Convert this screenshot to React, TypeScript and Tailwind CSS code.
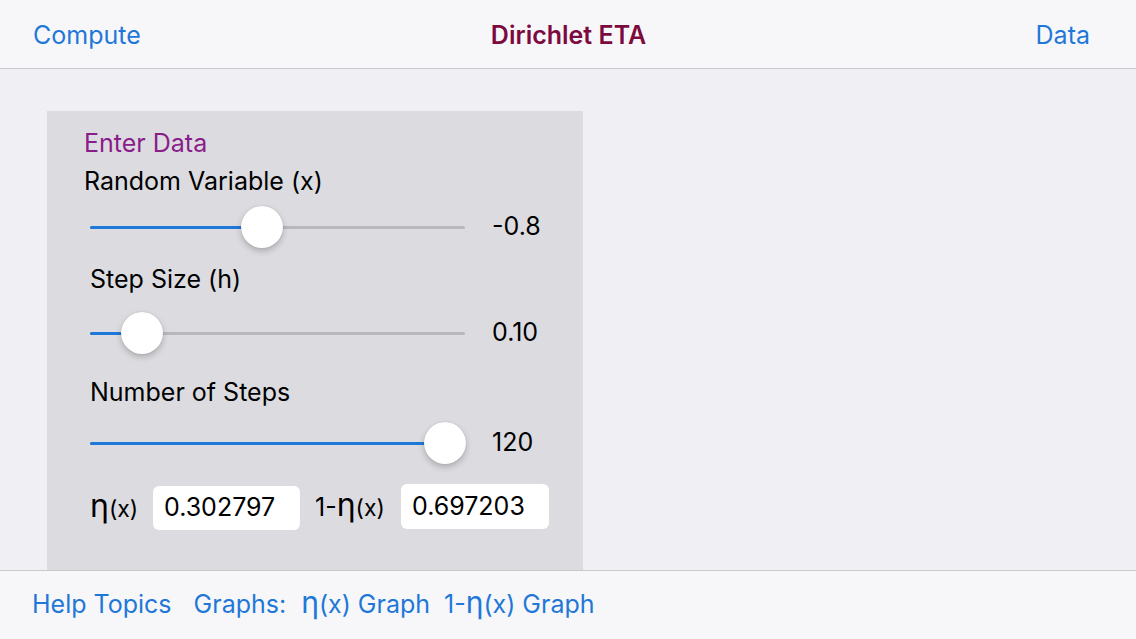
import React from "react";

interface SliderProps {
  pos: number; // thumb center, px from track start
  value: string;
}

function Slider({ pos, value }: SliderProps) {
  return (
    <div className="flex items-center h-[46px]">
      <div className="relative w-[375px] h-[3px] bg-[#b8b8bc] rounded-full">
        <div className="absolute left-0 top-0 h-[3px] bg-[#1f78d8] rounded-full" style={{ width: pos }} />
        <div
          className="absolute top-1/2 w-[42px] h-[42px] -translate-x-1/2 -translate-y-1/2 rounded-full bg-white shadow-[0_3px_6px_rgba(0,0,0,0.22),0_0_1px_rgba(0,0,0,0.2)]"
          style={{ left: pos }}
        />
      </div>
      <span className="ml-[27px] text-[25px] text-black">{value}</span>
    </div>
  );
}

export default function App() {
  return (
    <div className="w-[1136px] h-[639px] flex flex-col bg-[#efeff4] overflow-hidden font-['Inter','Liberation_Sans',sans-serif]">
      {/* nav bar */}
      <div className="h-[69px] shrink-0 grid grid-cols-[1fr_auto_1fr] items-center pl-[33px] pr-[46px] pt-[3px] bg-[#f7f7f9] border-b border-[#c9c9cd] text-[25px]">
        <span className="text-[#1f78d8]">Compute</span>
        <span className="font-semibold text-[#7c0a3e] translate-x-[7px]">Dirichlet ETA</span>
        <span className="text-[#1f78d8] text-right">Data</span>
      </div>

      {/* content */}
      <div className="flex-1 min-h-0 pt-[42px] pl-[47px]">
        <div className="w-[536px] h-full bg-[#dcdce0] pl-[37px] pt-[16px]">
          <div className="text-[25px] leading-[32px] text-[#8b1c8b]">Enter Data</div>
          <div className="text-[25px] leading-[32px] mt-[6px] text-black">Random Variable (x)</div>
          <div className="pl-[6px]">
            <div className="mt-[7px]">
              <Slider pos={172} value="-0.8" />
            </div>
            <div className="text-[25px] leading-[32px] mt-[13px] text-black">Step Size (h)</div>
            <div className="mt-[15px]">
              <Slider pos={52} value="0.10" />
            </div>
            <div className="text-[25px] leading-[32px] mt-[20px] text-black">Number of Steps</div>
            <div className="mt-[12px]">
              <Slider pos={355} value="120" />
            </div>
            <div className="flex items-center mt-[20px] text-[25px] text-black">
              <span className="w-[63px] flex items-baseline">
                <span className="text-[32px] leading-none">η</span>
                <span className="text-[23px]">(x)</span>
              </span>
              <div className="w-[147px] h-[44px] bg-white rounded-[6px] flex items-center pl-[11px]">0.302797</div>
              <span className="ml-[15px] w-[86px] flex items-baseline">
                1-<span className="text-[32px] leading-none">η</span>
                <span className="text-[23px]">(x)</span>
              </span>
              <div className="w-[148px] h-[45px] bg-white rounded-[6px] flex items-center pl-[11px] -mt-[3px]">0.697203</div>
            </div>
          </div>
        </div>
      </div>

      {/* toolbar */}
      <div className="h-[69px] shrink-0 flex items-center pl-[32px] bg-[#f7f7f9] border-t border-[#c9c9cd] text-[25px] text-[#1f78d8]">
        <span>Help Topics</span>
        <span className="ml-[22px]">Graphs:</span>
        <span className="ml-[15px] flex items-baseline">
          <span className="text-[30px] leading-none">η</span>(x) Graph
        </span>
        <span className="ml-[14px] flex items-baseline">
          1-<span className="text-[30px] leading-none">η</span>(x) Graph
        </span>
      </div>
    </div>
  );
}
